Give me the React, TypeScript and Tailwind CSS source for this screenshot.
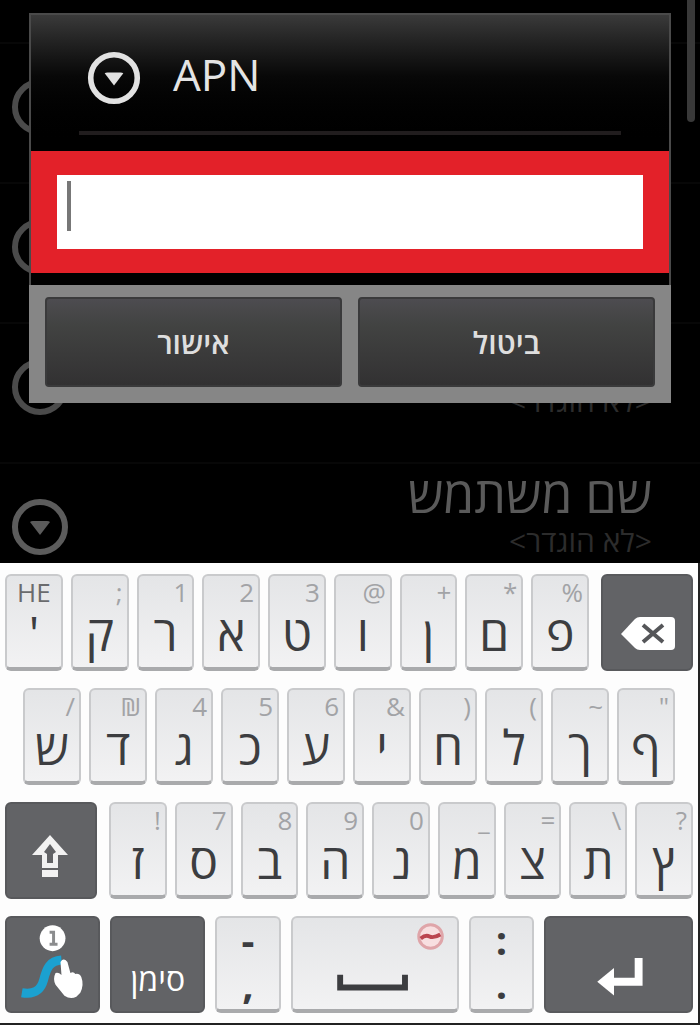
import { clsx } from "clsx";
import type { ReactNode } from "react";

interface KeyDef {
  letter: string;
  hint: string;
  darkHint?: boolean;
}

const TOP_ROW: KeyDef[] = [
  { letter: "'", hint: "HE", darkHint: true },
  { letter: "ק", hint: ";" },
  { letter: "ר", hint: "1" },
  { letter: "א", hint: "2" },
  { letter: "ט", hint: "3" },
  { letter: "ו", hint: "@" },
  { letter: "ן", hint: "+" },
  { letter: "ם", hint: "*" },
  { letter: "פ", hint: "%" },
];

const HOME_ROW: KeyDef[] = [
  { letter: "ש", hint: "/" },
  { letter: "ד", hint: "₪" },
  { letter: "ג", hint: "4" },
  { letter: "כ", hint: "5" },
  { letter: "ע", hint: "6" },
  { letter: "י", hint: "&" },
  { letter: "ח", hint: ")" },
  { letter: "ל", hint: "(" },
  { letter: "ך", hint: "~" },
  { letter: "ף", hint: '"' },
];

const BOTTOM_ROW: KeyDef[] = [
  { letter: "ז", hint: "!" },
  { letter: "ס", hint: "7" },
  { letter: "ב", hint: "8" },
  { letter: "ה", hint: "9" },
  { letter: "נ", hint: "0" },
  { letter: "מ", hint: "_" },
  { letter: "צ", hint: "=" },
  { letter: "ת", hint: "\\" },
  { letter: "ץ", hint: "?" },
];

const LIGHT_KEY =
  "rounded-md border-2 border-b-4 border-[#c9cacc] border-b-[#a9aaac] bg-linear-to-b from-[#e4e5e7] to-[#f2f2f3] text-[#3c3d40]";
const DARK_KEY = "rounded-md border-2 border-[#58595c] bg-[#626366] text-white";

const ArrowCircle = ({ className }: { className?: string }) => (
  <svg viewBox="0 0 58 58" className={className} aria-hidden="true">
    <circle cx="29" cy="29" r="25" fill="none" stroke="currentColor" strokeWidth="6" />
    <path d="M19 24q1-1 3-1h14q2 0 3 1L29 37z" fill="currentColor" />
  </svg>
);

const LetterKey = ({ letter, hint, darkHint }: KeyDef) => (
  <button
    type="button"
    className={clsx("flex min-w-0 flex-1 flex-col", LIGHT_KEY)}
  >
    <span
      className={clsx(
        "w-full px-1 text-[26px] leading-8",
        darkHint ? "text-center text-[#6a6b6d]" : "text-right text-[#a2a3a6]"
      )}
    >
      {hint}
    </span>
    <span className="w-full text-center text-[48px] leading-[50px]">{letter}</span>
  </button>
);

const PunctuationKey = ({ top, bottom }: { top: string; bottom: string }) => (
  <button
    type="button"
    className={clsx(
      "flex min-w-0 flex-[64] flex-col items-center text-[40px] font-bold leading-[44px]",
      LIGHT_KEY
    )}
  >
    <span>{top}</span>
    <span>{bottom}</span>
  </button>
);

const DarkKey = ({
  label,
  className,
  children,
}: {
  label: string;
  className: string;
  children: ReactNode;
}) => (
  <button type="button" aria-label={label} className={clsx(DARK_KEY, className)}>
    {children}
  </button>
);

const ROW = "flex h-[140px] items-start justify-between border-t-2 border-[#070707] pr-12 pl-[11px]";

const SettingsList = () => (
  <ul className="w-full">
    <li className="h-[42px]" />
    <li className={ROW}>
      <ArrowCircle className="mt-[34px] size-[58px] text-[#4b4b4b]" />
    </li>
    <li className={ROW}>
      <ArrowCircle className="mt-[34px] size-[58px] text-[#4b4b4b]" />
    </li>
    <li className={ROW}>
      <ArrowCircle className="mt-[34px] size-[58px] text-[#4b4b4b]" />
      <p dir="rtl" className="pt-14 text-[30px] leading-[42px] text-[#2c2c2c]">
        {"<לא הוגדר>"}
      </p>
    </li>
    <li className={ROW}>
      <ArrowCircle className="mt-[34px] size-[58px] text-[#5c5c5c]" />
      <div dir="rtl" className="pt-1">
        <h2 className="text-[50px] leading-[52px] text-[#5a5a5a]">שם משתמש</h2>
        <p className="text-[30px] leading-[42px] text-[#2c2c2c]">{"<לא הוגדר>"}</p>
      </div>
    </li>
  </ul>
);

const ApnDialog = () => (
  <div
    role="dialog"
    aria-labelledby="apn-title"
    className="absolute inset-x-[29px] top-[13px] border-2 border-[#4a4a4a] bg-black"
  >
    <div className="flex h-[136px] flex-col justify-between bg-linear-to-b from-[#3a3a3a] via-[#080808] via-45% to-black">
      <div className="flex items-center gap-8 pt-7 pl-14">
        <ArrowCircle className="mt-2 size-[54px] text-[#e2e2e2]" />
        <h1 id="apn-title" className="text-[44px] leading-[60px] text-[#e4e4e4]">
          APN
        </h1>
      </div>
      <hr className="mr-12 mb-4 ml-12 border-t-4 border-[#211d1e]" />
    </div>
    <div className="relative bg-[#e32129] px-[26px] py-6">
      <input
        type="text"
        aria-labelledby="apn-title"
        className="block h-[74px] w-full bg-white px-3 text-3xl outline-none"
      />
      <span className="absolute top-[30px] left-9 h-[50px] w-1 bg-[#777]" />
    </div>
    <div className="mt-3 -mx-0.5 -mb-0.5 flex gap-4 bg-[#868686] px-4 pt-3 pb-4">
      {["אישור", "ביטול"].map((label) => (
        <button
          key={label}
          type="button"
          className="h-[90px] flex-1 rounded-sm border-2 border-[#3a3a3b] bg-linear-to-b from-[#4d4c50] via-[#424342] via-30% to-[#323132] text-[30px] font-semibold text-[#dedede]"
        >
          {label}
        </button>
      ))}
    </div>
  </div>
);

const Keyboard = () => (
  <div className="flex flex-col gap-[17px] border-r-2 border-b-2 border-[#222] bg-[#fdfdfd] px-[5px] pt-[11px] pb-[10px]">
    <div className="flex h-[97px] gap-2">
      {TOP_ROW.map((key) => (
        <LetterKey key={key.letter} {...key} />
      ))}
      <DarkKey label="Backspace" className="ml-1 w-[92px]">
        <svg viewBox="0 0 88 93" className="size-full">
          <path d="M18 58 32 43q2-2 5-2h31q4 0 4 4v25q0 4-4 4H37q-3 0-5-2z" fill="#fff" />
          <path d="m40 49 20 17m0-17L40 66" stroke="#555659" strokeWidth="4" fill="none" />
        </svg>
      </DarkKey>
    </div>

    <div className="flex h-[97px] gap-2 px-[18px]">
      {HOME_ROW.map((key) => (
        <LetterKey key={key.letter} {...key} />
      ))}
    </div>

    <div className="flex h-[97px] gap-2">
      <DarkKey label="Shift" className="mr-1 w-[92px]">
        <svg viewBox="0 0 88 93" className="size-full">
          <path
            d="M43 31 61 51H51v13H35V51H25zM43 40l-6 8 3 2v9h6v-9l3-2z"
            fill="#f2f2f2"
            fillRule="evenodd"
          />
          <path d="M35 66h16v7H35z" fill="#f2f2f2" />
        </svg>
      </DarkKey>
      {BOTTOM_ROW.map((key) => (
        <LetterKey key={key.letter} {...key} />
      ))}
    </div>

    <div className="flex h-[97px] gap-[10px]">
      <DarkKey label="Swype" className="min-w-0 flex-[95]">
        <svg viewBox="0 0 92 93" className="size-full">
          <circle cx="46" cy="20" r="13" fill="#fff" />
          <path d="M43 14h4v12M43 26h8" stroke="#8b8c8e" strokeWidth="3" fill="none" />
          <path
            d="M15 75c12 2 19-2 22-13 3-12 6-19 18-20"
            stroke="#1ba1d0"
            strokeWidth="9"
            fill="none"
          />
          <path
            d="M54 44q3-5 7 0l3 11q3-2 5 1 4-1 6 3 3 8-1 16l-4 4q-6 3-12-1L49 67q-3-6 0-12 3-1 6 2z"
            fill="#fff"
          />
        </svg>
      </DarkKey>
      <DarkKey
        label="סימן"
        className="min-w-0 flex-[95] pt-7 text-[32px] text-[#d4d4d5]"
      >
        סימן
      </DarkKey>
      <PunctuationKey top="-" bottom="," />
      <button
        type="button"
        aria-label="Space"
        className={clsx("min-w-0 flex-[171]", LIGHT_KEY)}
      >
        <svg viewBox="0 0 167 91" className="size-full">
          <circle cx="140" cy="18" r="12" fill="#f8dfe0" stroke="#dfa5a9" strokeWidth="3" />
          <path d="M130 20q5-4 9-2t11-2" stroke="#bb4650" strokeWidth="4" fill="none" />
          <path d="M48 57v13h66V57" fill="none" stroke="#3c3d40" strokeWidth="6" />
        </svg>
      </button>
      <PunctuationKey top=":" bottom="." />
      <DarkKey label="Enter" className="min-w-0 flex-[151]">
        <svg viewBox="0 0 147 93" className="size-full">
          <path d="M94 40v24H66" fill="none" stroke="#fff" strokeWidth="8" />
          <path d="M52 64 69 50v28z" fill="#fff" />
        </svg>
      </DarkKey>
    </div>
  </div>
);

export default function App() {
  return (
    <div className="flex h-screen flex-col bg-black font-['Open_Sans','Noto_Sans',sans-serif]">
      <div className="relative min-h-[420px] flex-1 overflow-hidden">
        <SettingsList />
        <ApnDialog />
        <div className="absolute top-0 right-[5px] h-[122px] w-2 rounded-b bg-[#393939]" />
      </div>
      <Keyboard />
    </div>
  );
}
